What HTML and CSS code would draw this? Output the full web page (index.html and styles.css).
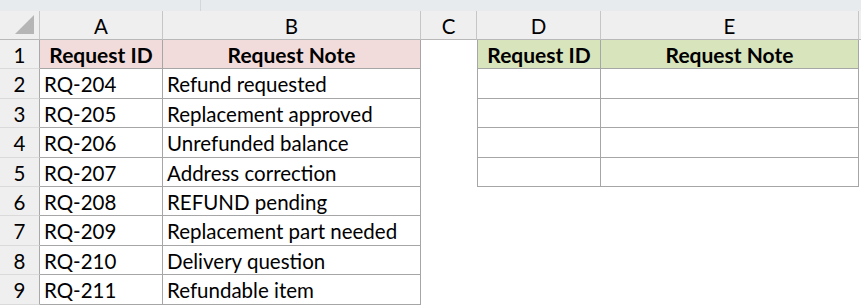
FILE: index.html
```html
<!DOCTYPE html>
<html>
<head>
<meta charset="utf-8">
<link rel="stylesheet" href="styles.css">
</head>
<body>
<div class="topbar"><div class="tb-left"></div><div class="tb-div"></div></div>
<div class="sheet">
  <div class="corner"><svg width="20" height="20" viewBox="0 0 20 20"><polygon points="19,0 19,19 0,19" fill="#b5b5b5"/></svg></div>
  <div class="ch">A</div><div class="ch">B</div><div class="ch">C</div><div class="ch">D</div><div class="ch">E</div><div class="ch ch-end"></div>

  <div class="rh">1</div><div class="c bd hp">Request ID</div><div class="c bd hp">Request Note</div><div class="c"></div><div class="c bd dl hg">Request ID</div><div class="c bd hg">Request Note</div><div class="c"></div>
  <div class="rh">2</div><div class="c bd">RQ-204</div><div class="c bd">Refund requested</div><div class="c"></div><div class="c bd dl"></div><div class="c bd"></div><div class="c"></div>
  <div class="rh">3</div><div class="c bd">RQ-205</div><div class="c bd">Replacement approved</div><div class="c"></div><div class="c bd dl"></div><div class="c bd"></div><div class="c"></div>
  <div class="rh">4</div><div class="c bd">RQ-206</div><div class="c bd">Unrefunded balance</div><div class="c"></div><div class="c bd dl"></div><div class="c bd"></div><div class="c"></div>
  <div class="rh">5</div><div class="c bd">RQ-207</div><div class="c bd">Address correction</div><div class="c"></div><div class="c bd dl"></div><div class="c bd"></div><div class="c"></div>
  <div class="rh">6</div><div class="c bd">RQ-208</div><div class="c bd">REFUND pending</div><div class="c"></div><div class="c"></div><div class="c"></div><div class="c"></div>
  <div class="rh">7</div><div class="c bd">RQ-209</div><div class="c bd">Replacement part needed</div><div class="c"></div><div class="c"></div><div class="c"></div><div class="c"></div>
  <div class="rh">8</div><div class="c bd">RQ-210</div><div class="c bd">Delivery question</div><div class="c"></div><div class="c"></div><div class="c"></div><div class="c"></div>
  <div class="rh">9</div><div class="c bd">RQ-211</div><div class="c bd">Refundable item</div><div class="c"></div><div class="c"></div><div class="c"></div><div class="c"></div>
</div>
</body>
</html>
```
FILE: styles.css
```css
html, body {
  margin: 0;
  padding: 0;
  background: #ffffff;
}
body {
  width: 861px;
  height: 307px;
  overflow: hidden;
  font-family: "Lato", "Liberation Sans", sans-serif;
  font-size: 20.5px;
  color: #000;
}
.topbar {
  height: 11px;
  background: #e8ebee;
  display: flex;
  align-items: stretch;
}
.tb-left {
  width: 200px;
}
.tb-div {
  width: 1px;
  background: #d3d7db;
}
.sheet {
  display: grid;
  grid-template-columns: 40px 123px 258px 56px 124px 258px 2px;
  grid-template-rows: 29px 29px 30px 29px 30px 29px 29px 30px 29px 30px;
}
.sheet > div {
  box-sizing: border-box;
}
.corner {
  background: #efefef;
  border-right: 1px solid #c6c6c6;
  border-bottom: 1px solid #b8b8b8;
  display: flex;
  align-items: flex-end;
  justify-content: flex-end;
  padding: 0 4px 4px 0;
}
.corner svg { display: block; }
.ch {
  background: #efefef;
  border-right: 1px solid #c6c6c6;
  border-bottom: 1px solid #b8b8b8;
  display: flex;
  align-items: center;
  justify-content: center;
  padding-top: 2px;
  font-size: 20.5px;
}
.ch-end {
  border-right: none;
}
.rh {
  background: #efefef;
  border-right: 1px solid #a9a9a9;
  border-bottom: 1px solid #dadada;
  display: flex;
  align-items: center;
  justify-content: center;
  padding-top: 1px;
}
.c {
  display: flex;
  align-items: center;
  padding: 1px 0 0 4px;
  white-space: nowrap;
}
.bd {
  border-right: 1px solid #a6a6a6;
  border-bottom: 1px solid #a6a6a6;
}
.dl {
  border-left: 1px solid #a6a6a6;
}
.hp {
  background: #f2dcdb;
  font-weight: bold;
  font-size: 21px;
  justify-content: center;
  padding-left: 0;
}
.hg {
  background: #d8e4bc;
  font-weight: bold;
  font-size: 21px;
  justify-content: center;
  padding-left: 0;
}
```
